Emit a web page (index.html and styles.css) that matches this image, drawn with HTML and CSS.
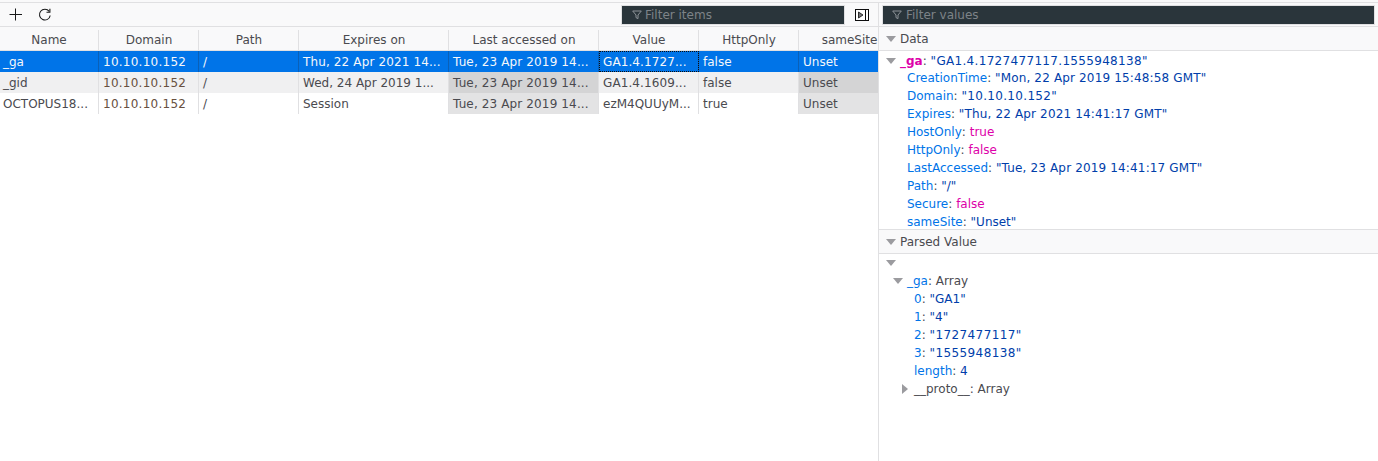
FILE: index.html
```html
<!DOCTYPE html>
<html lang="en">
<head>
<meta charset="utf-8">
<title>Storage</title>
<link rel="stylesheet" href="styles.css">
</head>
<body>
<div class="app">
  <div class="main">
    <div class="toolbar">
      <svg class="tool-add" width="14" height="14" viewBox="0 0 14 14"><path d="M6.5 .5v12M.5 6.5h12.5" stroke="#18191a" stroke-width="1" fill="none"/></svg>
      <svg class="tool-refresh" width="14" height="14" viewBox="0 0 14 14"><path d="M11.2 3.4A5.4 5.4 0 1 0 12.2 7.5" stroke="#18191a" stroke-width="1.1" fill="none"/><path d="M11.9 .8v3.4H8.5" stroke="#18191a" stroke-width="1.1" fill="none"/></svg>
      <div class="spacer"></div>
      <div class="filter filter-items">
        <svg class="funnel" width="10" height="10" viewBox="0 0 10 10"><path d="M.7 1h8.6L6 5v3.6L4 7.6V5z" stroke="#8d9398" stroke-width="1" fill="none"/></svg>
        <span class="ft">Filter items</span>
      </div>
      <svg class="tool-pane" width="14" height="12" viewBox="0 0 14 12"><rect x=".5" y=".5" width="13" height="11" fill="#fff" stroke="#0c0c0d"/><path d="M10.5 0v12" stroke="#0c0c0d"/><path d="M3.5 3v6L8 6z" fill="#77777a" stroke="#0c0c0d" stroke-width=".8"/></svg>
    </div>
    <div class="table">
      <div class="row head">
        <div class="c c-name">Name</div><div class="c c-domain">Domain</div><div class="c c-path">Path</div><div class="c c-exp">Expires on</div><div class="c c-last">Last accessed on</div><div class="c c-val">Value</div><div class="c c-http">HttpOnly</div><div class="c c-same">sameSite</div>
      </div>
      <div class="row selected">
        <div class="c c-name">_ga</div><div class="c c-domain ip">10.10.10.152</div><div class="c c-path">/</div><div class="c c-exp date">Thu, 22 Apr 2021 14...</div><div class="c c-last date">Tue, 23 Apr 2019 14...</div><div class="c c-val focus val">GA1.4.1727...</div><div class="c c-http">false</div><div class="c c-same">Unset</div>
      </div>
      <div class="row odd">
        <div class="c c-name">_gid</div><div class="c c-domain domain ip">10.10.10.152</div><div class="c c-path">/</div><div class="c c-exp">Wed, 24 Apr 2019 1...</div><div class="c c-last sorted date">Tue, 23 Apr 2019 14...</div><div class="c c-val val">GA1.4.1609...</div><div class="c c-http">false</div><div class="c c-same sorted">Unset</div>
      </div>
      <div class="row even">
        <div class="c c-name">OCTOPUS18...</div><div class="c c-domain domain ip">10.10.10.152</div><div class="c c-path">/</div><div class="c c-exp">Session</div><div class="c c-last sorted date">Tue, 23 Apr 2019 14...</div><div class="c c-val">ezM4QUUyM...</div><div class="c c-http">true</div><div class="c c-same sorted">Unset</div>
      </div>
    </div>
  </div>
  <div class="side">
    <div class="side-bar">
      <div class="filter filter-values">
        <svg class="funnel" width="10" height="10" viewBox="0 0 10 10"><path d="M.7 1h8.6L6 5v3.6L4 7.6V5z" stroke="#8d9398" stroke-width="1" fill="none"/></svg>
        <span class="ft">Filter values</span>
      </div>
    </div>
    <div class="section"><i class="tw down"></i><span class="st">Data</span></div>
    <div class="tree data">
      <div class="ln l0"><i class="tw down"></i><span class="k pink">_ga</span><span class="p">:&nbsp;</span><span class="s wide">"GA1.4.1727477117.1555948138"</span></div>
      <div class="ln l1"><span class="k">CreationTime</span><span class="p">:&nbsp;</span><span class="s gmt">"Mon, 22 Apr 2019 15:48:58 GMT"</span></div>
      <div class="ln l1"><span class="k">Domain</span><span class="p">:&nbsp;</span><span class="s wide">"10.10.10.152"</span></div>
      <div class="ln l1"><span class="k">Expires</span><span class="p">:&nbsp;</span><span class="s gmt">"Thu, 22 Apr 2021 14:41:17 GMT"</span></div>
      <div class="ln l1"><span class="k">HostOnly</span><span class="p">:&nbsp;</span><span class="b">true</span></div>
      <div class="ln l1"><span class="k">HttpOnly</span><span class="p">:&nbsp;</span><span class="b">false</span></div>
      <div class="ln l1"><span class="k">LastAccessed</span><span class="p">:&nbsp;</span><span class="s gmt">"Tue, 23 Apr 2019 14:41:17 GMT"</span></div>
      <div class="ln l1"><span class="k">Path</span><span class="p">:&nbsp;</span><span class="s">"/"</span></div>
      <div class="ln l1"><span class="k">Secure</span><span class="p">:&nbsp;</span><span class="b">false</span></div>
      <div class="ln l1"><span class="k">sameSite</span><span class="p">:&nbsp;</span><span class="s">"Unset"</span></div>
    </div>
    <div class="section"><i class="tw down"></i><span class="st">Parsed Value</span></div>
    <div class="tree parsed">
      <div class="ln l0"><i class="tw down"></i></div>
      <div class="ln l2"><i class="tw down"></i><span class="k">_ga</span><span class="p">:&nbsp;</span><span class="o">Array</span></div>
      <div class="ln l3"><span class="k">0</span><span class="p">:&nbsp;</span><span class="s">"GA1"</span></div>
      <div class="ln l3"><span class="k">1</span><span class="p">:&nbsp;</span><span class="s">"4"</span></div>
      <div class="ln l3"><span class="k">2</span><span class="p">:&nbsp;</span><span class="s wider">"1727477117"</span></div>
      <div class="ln l3"><span class="k">3</span><span class="p">:&nbsp;</span><span class="s wider">"1555948138"</span></div>
      <div class="ln l3"><span class="k">length</span><span class="p">:&nbsp;</span><span class="s">4</span></div>
      <div class="ln l4"><i class="tw right"></i><span class="k o">__proto__</span><span class="p">:&nbsp;</span><span class="o">Array</span></div>
    </div>
  </div>
</div>
</body>
</html>
```
FILE: styles.css
```css
* { box-sizing: border-box; }
html, body { margin: 0; height: 100%; }
body {
  font-family: "DejaVu Sans", sans-serif;
  font-size: 12px;
  color: #4a4a4f;
  background: #fff;
  overflow: hidden;
}
.app {
  display: flex;
  height: 461px;
  padding-top: 2px;
  background: #f9f9fa;
}
.main { width: 878px; flex: none; background: #fff; border-top: 1px solid #e0e0e2; overflow: hidden; }
.toolbar {
  height: 24px;
  display: flex;
  align-items: center;
  background: #f9f9fa;
  border-bottom: 1px solid #e0e0e2;
  padding-left: 9px;
}
.tool-refresh { margin-left: 15px; }
.spacer { flex: 1; }
.filter {
  height: 20px;
  background: #2a353b;
  border: 1px solid #e0e0e2;
  display: flex;
  align-items: center;
  color: #7d8388;
}
.ft { padding-top: 1px; }
.funnel { margin: 1px 4px 0 9px; flex: none; }
.filter-items { width: 224px; }
.filter-items .funnel { margin: 1px 3px 0 10px; }
.tool-pane { margin: 0 9px 0 10px; }
.row { display: flex; height: 21px; line-height: 23px; }
.c {
  flex: none;
  padding: 0 3px 0 4px;
  border-right: 1px solid #e0e0e2;
  white-space: nowrap;
  overflow: hidden;
}
.c:last-child { border-right: 0; }
.c-name { width: 99px; padding-left: 3px; }
.c-domain, .c-path, .c-val, .c-http, .c-same { width: 100px; }
.c-exp, .c-last { width: 150px; }
.ip { letter-spacing: .25px; }
.date { letter-spacing: .13px; }
.val { letter-spacing: .1px; }
.head {
  height: 24px;
  line-height: 20px;
  background: #f9f9fa;
  border-bottom: 1px solid #e0e0e2;
}
.head .c {
  text-align: center;
  height: 20px;
  line-height: 20px;
  margin-top: 3px;
  overflow: visible;
}
.selected { background: #0074e8; color: #f5f7fa; }
.selected .c { border-right-color: #0a60b8; }
.focus { outline: 1px dotted #0c0c0d; outline-offset: -1px; }
.odd { background: #f0f0f1; }
.odd .sorted { background: #d4d4d5; }
.even .sorted { background: #e3e3e4; }
.domain { color: #68503f; }
.side {
  flex: 1;
  min-width: 0;
  background: #fff;
  border-top: 1px solid #e0e0e2;
  border-left: 1px solid #e0e0e2;
}
.side-bar {
  height: 24px;
  display: flex;
  align-items: center;
  background: #f9f9fa;
  border-bottom: 1px solid #e0e0e2;
  padding-left: 3px;
}
.filter-values { flex: 1; margin-right: 3px; }
.section {
  height: 24px;
  background: #f9f9fa;
  border-bottom: 1px solid #e0e0e2;
  padding-left: 7px;
  display: flex;
  align-items: center;
}
.section .tw { margin-right: 4px; }
.st { padding-top: 1px; }
.tw { display: inline-block; flex: none; width: 0; height: 0; }
.tw.down {
  border-left: 5px solid transparent;
  border-right: 5px solid transparent;
  border-top: 6px solid #9b9b9f;
}
.tw.right {
  border-top: 5px solid transparent;
  border-bottom: 5px solid transparent;
  border-left: 6px solid #9b9b9f;
}
.tree { overflow: hidden; }
.data { height: 179px; border-bottom: 1px solid #e0e0e2; }
.ln { height: 18px; line-height: 18px; white-space: nowrap; display: flex; align-items: center; }
.data .l0 { padding-top: 2px; }
.l0 { padding-left: 7px; }
.l0 .tw { margin-right: 4px; }
.l1 { padding-left: 28px; }
.l2 { padding-left: 14px; }
.l2 .tw { margin-right: 4px; }
.l3 { padding-left: 35px; }
.l4 { padding-left: 23px; }
.l4 .tw { margin-right: 6px; }
.k { color: #0074e8; }
.k.o { color: #4a4a4f; }
.k.pink { color: #dd00a9; font-weight: bold; }
.p { color: #4a4a4f; }
.s { color: #003eaa; }
.gmt { letter-spacing: .15px; }
.wide { letter-spacing: .32px; }
.wider { letter-spacing: .4px; }
.b { color: #dd00a9; }
.o { color: #4a4a4f; }
```
